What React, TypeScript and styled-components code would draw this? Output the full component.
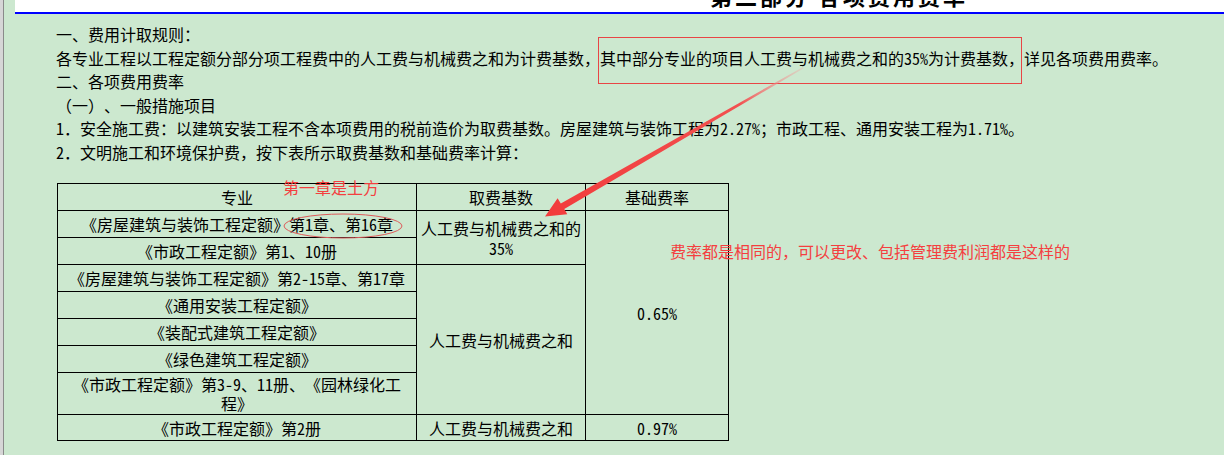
import React from "react";
import styled, { createGlobalStyle } from "styled-components";

const Global = createGlobalStyle`
  html, body { margin: 0; padding: 0; }
  body {
    background: #cce8cf;
    font-family: "Noto Sans CJK SC", "Noto Sans", sans-serif;
    color: #000;
    overflow: hidden;
    text-spacing-trim: space-all;
  }
`;

const Page = styled.div`
  position: relative;
  display: flex;
  width: 1224px;
  height: 455px;
  background: #cce8cf;
  overflow: hidden;
`;

const LeftRail = styled.div`
  width: 3px;
  flex: none;
  background: #d6d6d6;
  border-right: 1px solid #8a8a8a;
`;

const Main = styled.div`
  flex: 1;
  display: flex;
  flex-direction: column;
`;

const Header = styled.div`
  margin-left: 11px;
  height: 12px;
  background: #ffffff;
  border-bottom: 2px solid #0000ff;
  overflow: hidden;
  padding-left: 695px;
`;

const Title = styled.div`
  margin-top: -16px;
  font-size: 22px;
  line-height: 22px;
  font-weight: 700;
  white-space: nowrap;
  letter-spacing: 3px;
`;

const Body = styled.div`
  padding: 9px 0 0 52px;
  font-size: 16px;
  line-height: 23.5px;
  text-spacing-trim: space-all;
`;

const Para = styled.div`
  white-space: nowrap;
`;

const Num = styled.span`
  font-feature-settings: "hwid";
`;

const Table = styled.table`
  border-collapse: collapse;
  table-layout: fixed;
  width: 671px;
  margin: 19px 0 0 1px;
  font-size: 16px;
`;

const Col = styled.col<{ $w: number }>`
  width: ${(p) => p.$w}px;
`;

const Row = styled.tr<{ $h: number }>`
  height: ${(p) => p.$h}px;
`;

const Cell = styled.td<{ $lh?: number }>`
  border: 1px solid #000;
  text-align: center;
  vertical-align: middle;
  padding: 0 3px;
  line-height: ${(p) => p.$lh ?? 18}px;
`;

const HeadCell = styled(Cell).attrs({ as: "th" })`
  font-weight: 400;
`;

const RedBox = styled.div`
  position: absolute;
  left: 598px;
  top: 37px;
  width: 422px;
  height: 45px;
  border: 1px solid #e84545;
  pointer-events: none;
`;

const Note = styled.span<{ $x: number; $y: number }>`
  position: absolute;
  left: ${(p) => p.$x}px;
  top: ${(p) => p.$y}px;
  font-size: 16px;
  line-height: 20px;
  color: #f43f3f;
  white-space: nowrap;
  pointer-events: none;
`;

const Overlay = styled.svg`
  position: absolute;
  left: 0;
  top: 0;
  pointer-events: none;
`;

export default function App() {
  return (
    <>
      <Global />
      <Page>
        <LeftRail />
        <Main>
          <Header>
            <Title>第二部分 各项费用费率</Title>
          </Header>
          <Body>
            <Para>一、费用计取规则：</Para>
            <Para>
              各专业工程以工程定额分部分项工程费中的人工费与机械费之和为计费基数，其中部分专业的项目人工费与机械费之和的<Num>35%</Num>为计费基数，详见各项费用费率。
            </Para>
            <Para>二、各项费用费率</Para>
            <Para>（一）、一般措施项目</Para>
            <Para>
              <Num>1</Num>．安全施工费：以建筑安装工程不含本项费用的税前造价为取费基数。房屋建筑与装饰工程为<Num>2.27%</Num>；市政工程、通用安装工程为<Num>1.71%</Num>。
            </Para>
            <Para>
              <Num>2</Num>．文明施工和环境保护费，按下表所示取费基数和基础费率计算：
            </Para>
            <Table>
              <colgroup>
                <Col $w={359} />
                <Col $w={169} />
                <Col $w={143} />
              </colgroup>
              <tbody>
                <Row $h={27}>
                  <HeadCell>专业</HeadCell>
                  <HeadCell>取费基数</HeadCell>
                  <HeadCell>基础费率</HeadCell>
                </Row>
                <Row $h={27}>
                  <Cell>
                    《房屋建筑与装饰工程定额》第<Num>1</Num>章、第<Num>16</Num>章
                  </Cell>
                  <Cell rowSpan={2} $lh={20}>
                    人工费与机械费之和的<Num>35%</Num>
                  </Cell>
                  <Cell rowSpan={7}>
                    <Num>0.65%</Num>
                  </Cell>
                </Row>
                <Row $h={27}>
                  <Cell>
                    《市政工程定额》第<Num>1</Num>、<Num>10</Num>册
                  </Cell>
                </Row>
                <Row $h={27}>
                  <Cell>
                    《房屋建筑与装饰工程定额》第<Num>2-15</Num>章、第<Num>17</Num>章
                  </Cell>
                  <Cell rowSpan={5}>人工费与机械费之和</Cell>
                </Row>
                <Row $h={27}>
                  <Cell>《通用安装工程定额》</Cell>
                </Row>
                <Row $h={27}>
                  <Cell>《装配式建筑工程定额》</Cell>
                </Row>
                <Row $h={27}>
                  <Cell>《绿色建筑工程定额》</Cell>
                </Row>
                <Row $h={42}>
                  <Cell $lh={19}>
                    《市政工程定额》第<Num>3-9</Num>、<Num>11</Num>册、《园林绿化工程》
                  </Cell>
                </Row>
                <Row $h={26}>
                  <Cell>
                    《市政工程定额》第<Num>2</Num>册
                  </Cell>
                  <Cell>人工费与机械费之和</Cell>
                  <Cell>
                    <Num>0.97%</Num>
                  </Cell>
                </Row>
              </tbody>
            </Table>
          </Body>
        </Main>
        <RedBox />
        <Note $x={283} $y={177}>第一章是土方</Note>
        <Note $x={670} $y={241}>费率都是相同的，可以更改、包括管理费利润都是这样的</Note>
        <Overlay width={1224} height={455} viewBox="0 0 1224 455">
          <defs>
            <linearGradient id="arrowGrad" x1="803" y1="67" x2="548" y2="215" gradientUnits="userSpaceOnUse">
              <stop offset="0" stopColor="#f4a5a5" stopOpacity="0.3" />
              <stop offset="0.25" stopColor="#f25050" />
              <stop offset="1" stopColor="#f23c3c" />
            </linearGradient>
          </defs>
          <polygon
            points="803,67 803.8,68.2 564.3,208.9 567.3,214.2 545,216.5 557.6,198.3 560.8,203.5"
            fill="url(#arrowGrad)"
          />
          <ellipse cx={343} cy={226} rx={59} ry={12} fill="none" stroke="#dd5a5a" strokeWidth={1} />
        </Overlay>
      </Page>
    </>
  );
}
